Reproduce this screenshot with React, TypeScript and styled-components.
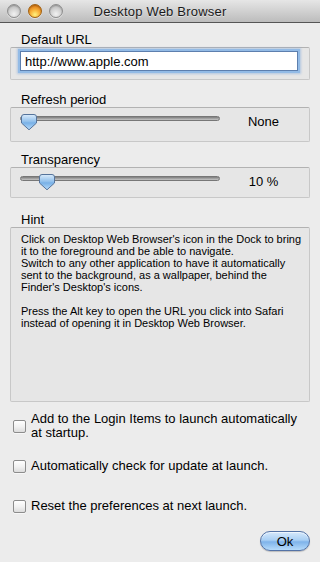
import React from "react";
import styled, { createGlobalStyle } from "styled-components";

const GlobalStyle = createGlobalStyle`
  html, body { margin: 0; padding: 0; }
  body { background: #ececec; font-family: "Liberation Sans", Arial, sans-serif; color: #000; }
  * { box-sizing: border-box; }
`;

const Window = styled.div`
  width: 320px;
  height: 562px;
  display: flex;
  flex-direction: column;
  background: #ececec;
  overflow: hidden;
`;

const TitleBar = styled.div`
  height: 23px;
  flex: none;
  display: grid;
  grid-template-columns: 1fr auto 1fr;
  align-items: center;
  background: linear-gradient(#e6e6e6, #bcbcbc);
  border-bottom: 1px solid #555;
`;

const Lights = styled.div`
  display: flex;
  gap: 7px;
  padding-left: 7px;
  margin-top: -1px;
`;

const Light = styled.span<{ $active?: boolean }>`
  width: 14px;
  height: 14px;
  border-radius: 50%;
  border: 1px solid ${(p) => (p.$active ? "#a2600f" : "#8e8e8e")};
  background: ${(p) =>
    p.$active
      ? "radial-gradient(circle at 50% 80%, #fff27e 0%, #f9b43c 40%, #e0821b 75%, #c96d10 100%)"
      : "radial-gradient(circle at 50% 75%, #f2f2f2 0%, #d4d4d4 45%, #ababab 100%)"};
  box-shadow: inset 0 1px 1px rgba(0, 0, 0, 0.2), 0 1px 0 rgba(255, 255, 255, 0.5);
`;

const Title = styled.div`
  font-size: 13px;
  color: #1a1a1a;
  text-shadow: 0 1px 0 rgba(255, 255, 255, 0.5);
  letter-spacing: 0.2px;
`;

const Content = styled.div`
  flex: 1;
  display: flex;
  flex-direction: column;
  padding: 0 10px;
`;

const SectionLabel = styled.div<{ $top: number }>`
  font-size: 13px;
  line-height: 14px;
  height: 14px;
  margin-top: ${(p) => p.$top}px;
  padding-left: 11px;
`;

const GroupBox = styled.div<{ $height: number }>`
  height: ${(p) => p.$height}px;
  border: 1px solid #c8c8c8;
  border-top-color: #b2b2b2;
  border-radius: 2px;
  background: #e6e6e6;
`;

const UrlBox = styled(GroupBox)`
  display: flex;
  align-items: flex-start;
  padding: 3px 11px 0 9px;
`;

const UrlInput = styled.input`
  flex: 1;
  height: 20px;
  border: 1px solid #5d7fae;
  border-radius: 0;
  box-shadow: 0 0 0 2px #93bbe6, 0 0 2px 3px rgba(120, 165, 220, 0.45);
  background: #fff;
  font-family: "Liberation Sans", Arial, sans-serif;
  font-size: 13px;
  padding: 0 4px;
  color: #000;
  outline: none;
`;

const SliderBox = styled(GroupBox)`
  display: flex;
  align-items: flex-start;
  padding: 5px 2px 0 9px;
`;

const SliderTrack = styled.div`
  position: relative;
  width: 200px;
  height: 18px;
  flex: none;
`;

const TrackBar = styled.div`
  position: absolute;
  left: 0;
  right: 0;
  top: 3px;
  height: 5px;
  border-radius: 3px;
  background: linear-gradient(#7c7c7c, #a9a9a9 60%, #c4c4c4);
  border: 1px solid #777;
`;

const Knob = styled.svg`
  position: absolute;
  top: 0;
  width: 18px;
  height: 18px;
`;

const ValueText = styled.div`
  flex: 1;
  text-align: center;
  font-size: 13px;
  line-height: 17px;
`;

const HintBox = styled(GroupBox)`
  padding: 5px 10px 0 10px;
  font-size: 11px;
  line-height: 12px;
`;

const HintLine = styled.div`
  height: 12px;
  white-space: nowrap;
`;

const CheckRow = styled.label<{ $top?: number }>`
  height: 40px;
  flex: none;
  display: flex;
  align-items: center;
  gap: 5px;
  padding-left: 3px;
  margin-top: ${(p) => p.$top ?? 0}px;
  font-size: 13px;
  line-height: 14px;
`;

const CheckBox = styled.span`
  width: 13px;
  height: 13px;
  flex: none;
  border: 1px solid #8c8c8c;
  border-radius: 2px;
  background: linear-gradient(#ffffff, #f2f2f2 50%, #dcdcdc);
  box-shadow: 0 1px 0 rgba(255, 255, 255, 0.6);
`;

const Footer = styled.div`
  display: flex;
  justify-content: flex-end;
  margin-top: 5px;
`;

const OkButton = styled.button`
  width: 50px;
  height: 20px;
  border-radius: 10px;
  border: 1px solid #5473a6;
  background: linear-gradient(#d6e9fc 0%, #a9cff4 45%, #7fb3ea 55%, #b6dbfb 100%);
  box-shadow: inset 0 1px 0 rgba(255, 255, 255, 0.6), 0 1px 1px rgba(0, 0, 0, 0.2);
  font-family: "Liberation Sans", Arial, sans-serif;
  font-size: 13px;
  color: #000;
  padding: 0;
`;

const KnobShape = ({ left }: { left: number }) => (
  <Knob viewBox="0 0 18 18" style={{ left }}>
    <defs>
      <linearGradient id={`kg${left}`} x1="0" y1="0" x2="0" y2="1">
        <stop offset="0" stopColor="#dcecfb" />
        <stop offset="0.45" stopColor="#93c1ec" />
        <stop offset="0.55" stopColor="#78b0e6" />
        <stop offset="1" stopColor="#b8dcfb" />
      </linearGradient>
    </defs>
    <path
      d="M1.5 4 Q1.5 1.5 4 1.5 L14 1.5 Q16.5 1.5 16.5 4 L16.5 10 L9 16.8 L1.5 10 Z"
      fill={`url(#kg${left})`}
      stroke="#55739b"
      strokeWidth="1"
    />
  </Knob>
);

const Slider = ({ value }: { value: number }) => (
  <SliderTrack>
    <TrackBar />
    <KnobShape left={Math.round(value * 182)} />
  </SliderTrack>
);

const hint = [
  "Click on Desktop Web Browser's icon in the Dock to bring",
  "it to the foreground and be able to navigate.",
  "Switch to any other application to have it automatically",
  "sent to the background, as a wallpaper, behind the",
  "Finder's Desktop's icons.",
  "",
  "Press the Alt key to open the URL you click into Safari",
  "instead of opening it in Desktop Web Browser.",
];

export default function App() {
  return (
    <>
      <GlobalStyle />
      <Window>
        <TitleBar>
          <Lights>
            <Light />
            <Light $active />
            <Light />
          </Lights>
          <Title>Desktop Web Browser</Title>
          <span />
        </TitleBar>
        <Content>
          <SectionLabel $top={10}>Default URL</SectionLabel>
          <UrlBox $height={33}>
            <UrlInput defaultValue="http://www.apple.com" />
          </UrlBox>

          <SectionLabel $top={13}>Refresh period</SectionLabel>
          <SliderBox $height={35}>
            <Slider value={0} />
            <ValueText>None</ValueText>
          </SliderBox>

          <SectionLabel $top={11}>Transparency</SectionLabel>
          <SliderBox $height={31}>
            <Slider value={0.1} />
            <ValueText>10 %</ValueText>
          </SliderBox>

          <SectionLabel $top={15}>Hint</SectionLabel>
          <HintBox $height={175}>
            {hint.map((l, i) => (
              <HintLine key={i}>{l}</HintLine>
            ))}
          </HintBox>

          <CheckRow $top={4}>
            <CheckBox />
            <span>
              Add to the Login Items to launch automatically
              <br />
              at startup.
            </span>
          </CheckRow>
          <CheckRow>
            <CheckBox />
            <span>Automatically check for update at launch.</span>
          </CheckRow>
          <CheckRow>
            <CheckBox />
            <span>Reset the preferences at next launch.</span>
          </CheckRow>

          <Footer>
            <OkButton>Ok</OkButton>
          </Footer>
        </Content>
      </Window>
    </>
  );
}
